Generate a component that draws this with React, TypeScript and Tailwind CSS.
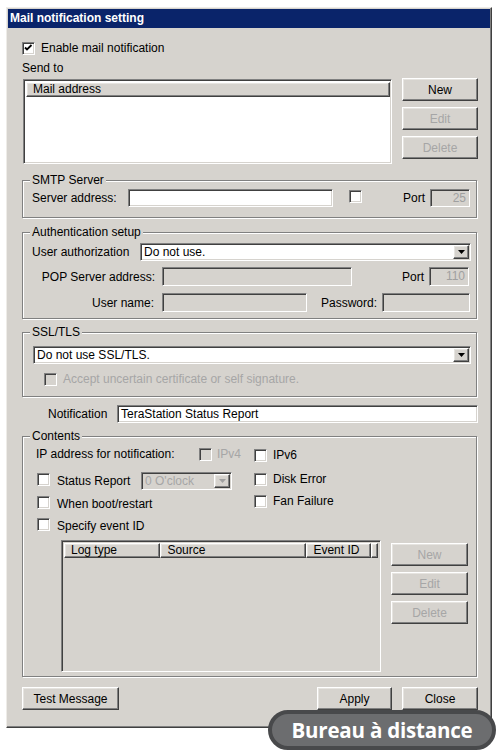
import React from "react";

const sunken =
  "border border-t-[#808080] border-l-[#808080] border-b-white border-r-white shadow-[inset_1px_1px_0_#404040,inset_-1px_-1px_0_#d6d3ce]";
const raised =
  "border border-t-white border-l-white border-b-[#404040] border-r-[#404040] shadow-[inset_-1px_-1px_0_#808080,inset_1px_1px_0_#e6e4e0]";
const etched = "border border-[#808080] shadow-[1px_1px_0_#ffffff,inset_1px_1px_0_#ffffff]";

function Check({ checked = false, disabled = false }: { checked?: boolean; disabled?: boolean }) {
  return (
    <span
      className={
        disabled
          ? `relative inline-block w-[13px] h-[13px] shrink-0 bg-[#d6d3ce] ${sunken}`
          : `relative inline-block w-[13px] h-[13px] shrink-0 bg-white ${sunken}`
      }
    >
      {checked && (
        <svg width="11" height="11" viewBox="0 0 11 11" className="absolute left-0 top-0">
          <path d="M2 4.5 L4 6.5 L8.5 2" stroke="#000" strokeWidth="1.8" fill="none" />
        </svg>
      )}
    </span>
  );
}

function Arrow({ disabled = false }: { disabled?: boolean }) {
  return (
    <span className={`flex items-center justify-center w-[16px] h-[14px] bg-[#d6d3ce] ${raised}`}>
      <svg width="7" height="4" viewBox="0 0 7 4">
        <path d="M0 0 L7 0 L3.5 4 Z" fill={disabled ? "#a0a0a0" : "#000"} />
      </svg>
    </span>
  );
}

function Btn({ label, w, disabled = false }: { label: string; w: string; disabled?: boolean }) {
  return (
    <div
      className={
        disabled
          ? `${w} h-[23px] flex items-center justify-center bg-[#d6d3ce] text-[#a6a6a6] ${raised}`
          : `${w} h-[23px] flex items-center justify-center bg-[#d6d3ce] text-black ${raised}`
      }
    >
      {label}
    </div>
  );
}

function Group({ title, className, children }: { title: string; className: string; children: React.ReactNode }) {
  return (
    <div className={`${etched} ${className}`}>
      <div className="-mt-[8px] ml-[7px] w-fit px-[2px] bg-[#d6d3ce] leading-[14px] h-[14px]">{title}</div>
      {children}
    </div>
  );
}

export default function App() {
  return (
    <div className="relative w-[498px] h-[756px] bg-white font-['Liberation_Sans',Arial,sans-serif] text-[12px] leading-[14px] text-black overflow-hidden">
      <div className="ml-[6px] pt-[7px]">
        <div className="w-[486px] h-[721px] bg-[#d6d3ce] border border-t-[#eeece8] border-l-[#eeece8] border-b-[#404040] border-r-[#404040] p-[1px] shadow-[inset_-1px_-1px_0_#808080]">
          <div className="h-[19px] bg-[#0a246a] text-white font-bold text-[12px] leading-[19px] pl-[2px]">
            Mail notification setting
          </div>
          <div className="pl-[14px] w-[470px] flex flex-col">
            {/* Enable */}
            <div className="mt-[13px] h-[14px] flex items-center gap-[6px]">
              <Check checked />
              <span>Enable mail notification</span>
            </div>
            <div className="mt-[6px] h-[14px]">Send to</div>
            {/* list row */}
            <div className="mt-[3px] flex w-[456px]">
              <div className={`ml-[1px] mt-[1px] w-[369px] h-[85px] bg-white ${sunken} p-[1px] pl-[2px] pt-[2px]`}>
                <div className={`h-[15px] bg-[#d6d3ce] ${raised} pl-[6px] leading-[13px]`}>Mail address</div>
              </div>
              <div className="ml-auto flex flex-col gap-[6px]">
                <Btn label="New" w="w-[76px]" />
                <Btn label="Edit" w="w-[76px]" disabled />
                <Btn label="Delete" w="w-[76px]" disabled />
              </div>
            </div>
            {/* SMTP */}
            <Group title="SMTP Server" className="mt-[16px] w-[455px] pb-[10px]">
              <div className="mt-[2px] h-[18px] flex items-center">
                <span className="ml-[9px] w-[96px]">Server address:</span>
                <div className={`w-[205px] h-[18px] bg-white ${sunken}`} />
                <span className="ml-[16px]">
                  <Check />
                </span>
                <span className="ml-[41px]">Port</span>
                <div className={`ml-[5px] w-[40px] h-[18px] ${sunken} text-right pr-[3px] leading-[16px] text-[#a0a0a0]`}>25</div>
              </div>
            </Group>
            {/* Auth */}
            <Group title="Authentication setup" className="mt-[14px] w-[455px] pb-[6px]">
              <div className="mt-[4px] h-[18px] flex items-center">
                <span className="ml-[9px] w-[108px]">User authorization</span>
                <div className={`w-[331px] h-[18px] bg-white ${sunken} flex items-center justify-between pl-[3px] pr-[1px]`}>
                  <span>Do not use.</span>
                  <Arrow />
                </div>
              </div>
              <div className="mt-[6px] h-[19px] flex items-center">
                <span className="w-[132px] text-right">POP Server address:</span>
                <div className={`ml-[7px] w-[190px] h-[19px] ${sunken}`} />
                <span className="ml-[50px]">Port</span>
                <div className={`ml-[5px] w-[40px] h-[19px] ${sunken} text-right pr-[3px] leading-[17px] text-[#a0a0a0]`}>110</div>
              </div>
              <div className="mt-[7px] h-[19px] flex items-center">
                <span className="w-[131px] text-right">User name:</span>
                <div className={`ml-[8px] w-[145px] h-[19px] ${sunken}`} />
                <span className="ml-[14px] w-[52px]">Password:</span>
                <div className={`ml-[9px] w-[88px] h-[19px] ${sunken}`} />
              </div>
            </Group>
            {/* SSL */}
            <Group title="SSL/TLS" className="mt-[13px] w-[455px] pb-[10px]">
              <div className={`mt-[7px] ml-[10px] w-[438px] h-[18px] bg-white ${sunken} flex items-center justify-between pl-[3px] pr-[1px]`}>
                <span>Do not use SSL/TLS.</span>
                <Arrow />
              </div>
              <div className="mt-[8px] h-[14px] flex items-center gap-[6px] pl-[21px] text-[#a6a6a6]">
                <Check disabled />
                <span>Accept uncertain certificate or self signature.</span>
              </div>
            </Group>
            {/* Notification */}
            <div className="mt-[8px] h-[18px] flex items-center">
              <span className="ml-[26px] w-[69px]">Notification</span>
              <div className={`w-[361px] h-[18px] bg-white ${sunken} pl-[3px] leading-[16px]`}>TeraStation Status Report</div>
            </div>
            {/* Contents */}
            <Group title="Contents" className="mt-[13px] w-[455px] pb-[4px]">
              <div className="flex pl-[13px]">
                <div className="w-[218px] flex flex-col">
                  <div className="mt-[4px] h-[14px] flex items-center">
                    <span className="w-[163px]">IP address for notification:</span>
                    <Check disabled />
                    <span className="ml-[5px] text-[#a6a6a6]">IPv4</span>
                  </div>
                  <div className="mt-[11px] h-[18px] flex items-center">
                    <span className="ml-[1px]"><Check /></span>
                    <span className="ml-[7px] w-[84px]">Status Report</span>
                    <div className={`w-[91px] h-[18px] ${sunken} flex items-center justify-between pl-[3px] pr-[1px] text-[#a6a6a6]`}>
                      <span>0 O'clock</span>
                      <Arrow disabled />
                    </div>
                  </div>
                  <div className="mt-[7px] h-[14px] flex items-center">
                    <span className="ml-[1px]"><Check /></span>
                    <span className="ml-[7px]">When boot/restart</span>
                  </div>
                  <div className="mt-[8px] h-[14px] flex items-center">
                    <span className="ml-[1px]"><Check /></span>
                    <span className="ml-[7px]">Specify event ID</span>
                  </div>
                </div>
                <div className="flex flex-col">
                  <div className="mt-[5px] h-[14px] flex items-center">
                    <Check />
                    <span className="ml-[6px]">IPv6</span>
                  </div>
                  <div className="mt-[10px] h-[14px] flex items-center">
                    <Check />
                    <span className="ml-[6px]">Disk Error</span>
                  </div>
                  <div className="mt-[8px] h-[14px] flex items-center">
                    <Check />
                    <span className="ml-[6px]">Fan Failure</span>
                  </div>
                </div>
              </div>
              <div className="mt-[7px] ml-[38px] flex">
                <div className={`w-[320px] h-[132px] ${sunken} p-[2px] pb-0`}>
                  <div className="flex h-[15px]">
                    <div className={`w-[97px] h-[15px] ${raised} pl-[6px] leading-[13px]`}>Log type</div>
                    <div className={`w-[147px] h-[15px] ${raised} pl-[6px] leading-[13px]`}>Source</div>
                    <div className={`w-[65px] h-[15px] ${raised} pl-[6px] leading-[13px]`}>Event ID</div>
                    <div className={`w-[7px] h-[15px] ${raised}`} />
                  </div>
                </div>
                <div className="ml-[10px] mt-[3px] flex flex-col gap-[6px]">
                  <Btn label="New" w="w-[77px]" disabled />
                  <Btn label="Edit" w="w-[77px]" disabled />
                  <Btn label="Delete" w="w-[77px]" disabled />
                </div>
              </div>
            </Group>
            {/* Bottom buttons */}
            <div className="mt-[10px] flex w-[456px]">
              <Btn label="Test Message" w="w-[97px]" />
              <div className="ml-auto flex gap-[10px]">
                <Btn label="Apply" w="w-[75px]" />
                <Btn label="Close" w="w-[76px]" />
              </div>
            </div>
          </div>
        </div>
      </div>
      {/* Badge */}
      <div className="absolute left-[268px] top-[710px] w-[228px] h-[40px] rounded-full bg-[#6c6d6f] border-[4px] border-[#48494b] flex items-center justify-center">
        <span className="font-['Open_Sans',sans-serif] font-bold text-[20.5px] leading-none text-white tracking-[-0.2px]">Bureau à distance</span>
      </div>
    </div>
  );
}
